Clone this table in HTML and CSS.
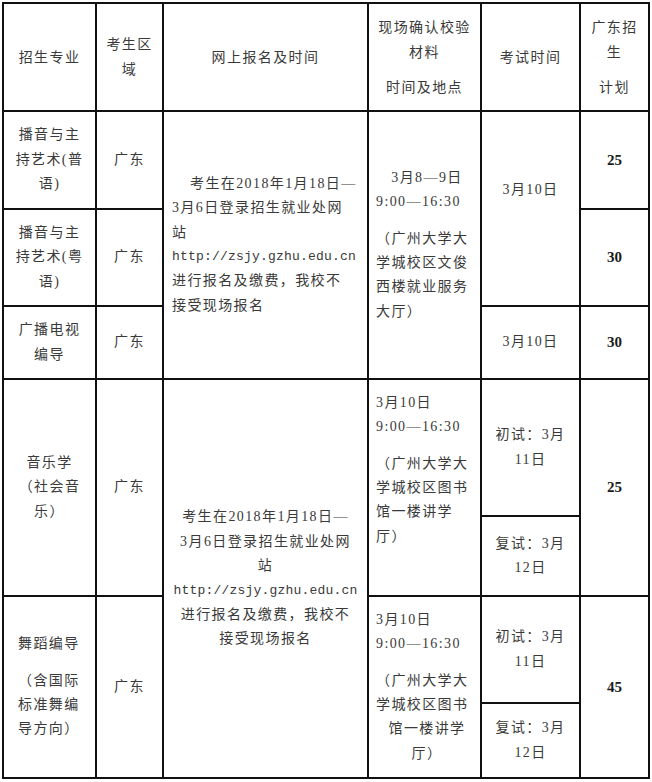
FILE: index.html
```html
<!DOCTYPE html>
<html lang="zh-CN">
<head>
<meta charset="utf-8">
<title>招生计划</title>
<link rel="stylesheet" href="styles.css">
</head>
<body>
<table class="plan">
  <colgroup>
    <col class="c1"><col class="c2"><col class="c3"><col class="c4"><col class="c5"><col class="c6">
  </colgroup>
  <tr class="r-head">
    <td>招生专业</td>
    <td>考生区<br>域</td>
    <td>网上报名及时间</td>
    <td><div>现场确认校验<br>材料</div><div class="gap">时间及地点</div></td>
    <td>考试时间</td>
    <td><div>广东招<br>生</div><div class="gap">计划</div></td>
  </tr>
  <tr class="r1">
    <td>播音与主<br>持艺术(普<br>语)</td>
    <td>广东</td>
    <td rowspan="3" class="online left">
      <div class="ind">考生在2018年1月18日—</div>
      <div>3月6日登录招生就业处网</div>
      <div>站</div>
      <div class="url">http://zsjy.gzhu.edu.cn</div>
      <div>进行报名及缴费，我校不</div>
      <div>接受现场报名</div>
    </td>
    <td rowspan="3" class="site">
      <div class="center">3月8—9日</div>
      <div>9:00—16:30</div>
      <div class="gap">（广州大学大<br>学城校区文俊<br>西楼就业服务<br>大厅）</div>
    </td>
    <td rowspan="2" class="exam-top">3月10日</td>
    <td class="num">25</td>
  </tr>
  <tr class="r2">
    <td>播音与主<br>持艺术(粤<br>语)</td>
    <td>广东</td>
    <td class="num">30</td>
  </tr>
  <tr class="r3">
    <td>广播电视<br>编导</td>
    <td>广东</td>
    <td>3月10日</td>
    <td class="num">30</td>
  </tr>
  <tr class="r4">
    <td rowspan="2">音乐学<br>（社会音<br>乐）</td>
    <td rowspan="2">广东</td>
    <td rowspan="4" class="online">
      <div>考生在2018年1月18日—</div>
      <div>3月6日登录招生就业处网</div>
      <div>站</div>
      <div class="url">http://zsjy.gzhu.edu.cn</div>
      <div>进行报名及缴费，我校不</div>
      <div>接受现场报名</div>
    </td>
    <td rowspan="2" class="site site-music">
      <div>3月10日</div>
      <div>9:00—16:30</div>
      <div class="gap">（广州大学大<br>学城校区图书<br>馆一楼讲学<br>厅）</div>
    </td>
    <td>初试：3月<br>11日</td>
    <td rowspan="2" class="num">25</td>
  </tr>
  <tr class="r5">
    <td>复试：3月<br>12日</td>
  </tr>
  <tr class="r6">
    <td rowspan="2" class="dance">
      <div>舞蹈编导</div>
      <div class="gap">（含国际<br>标准舞编<br>导方向）</div>
    </td>
    <td rowspan="2">广东</td>
    <td rowspan="2" class="site">
      <div>3月10日</div>
      <div>9:00—16:30</div>
      <div class="gap">（广州大学大<br>学城校区图书</div>
      <div class="center">馆一楼讲学<br>厅）</div>
    </td>
    <td>初试：3月<br>11日</td>
    <td rowspan="2" class="num">45</td>
  </tr>
  <tr class="r7">
    <td>复试：3月<br>12日</td>
  </tr>
</table>
</body>
</html>
```

FILE: styles.css
```css
html, body {
  margin: 0;
  padding: 0;
  background: #fff;
}

body {
  padding: 2px 0 0 2px;
}

.plan {
  border-collapse: collapse;
  table-layout: fixed;
  width: 648px;
  font-family: "Liberation Serif", "Noto Sans CJK SC", serif;
  font-size: 14px;
  line-height: 24.4px;
  letter-spacing: 1.4px;
  color: #3a3a3a;
}

.plan td {
  border: 2px solid #111;
  padding: 0 6px;
  text-align: center;
  vertical-align: middle;
}

.c1 { width: 93px; }
.c2 { width: 67px; }
.c3 { width: 205px; }
.c4 { width: 113px; }
.c5 { width: 99px; }
.c6 { width: 69px; }

.r-head { height: 108px; }
.r-head td { line-height: 25px; }
.r1 { height: 98px; }
.r2 { height: 97px; }
.r3 { height: 73px; }
.r4 { height: 137px; }
.r5 { height: 80px; }
.r6 { height: 107px; }
.r7 { height: 75px; }

.gap { margin-top: 12px; }

.r-head .gap { margin-top: 10px; }

.plan td.left { text-align: left; }
.plan .center { text-align: center; }

.plan td.online.left { padding-left: 8px; }
.ind { text-indent: 18px; }

.url {
  font-family: "Liberation Mono", monospace;
  font-size: 13px;
  letter-spacing: 0.2px;
}

.plan td.site {
  text-align: left;
  padding-left: 7px;
  padding-right: 2px;
}

.plan td.site-music { padding-bottom: 35px; }

.plan td.exam-top { padding-bottom: 37px; }

.plan td.dance {
  text-align: left;
  padding-left: 14px;
  padding-right: 2px;
}

.plan td.num {
  font-weight: bold;
  font-size: 15px;
  letter-spacing: 0;
  color: #1a1a1a;
}
```
